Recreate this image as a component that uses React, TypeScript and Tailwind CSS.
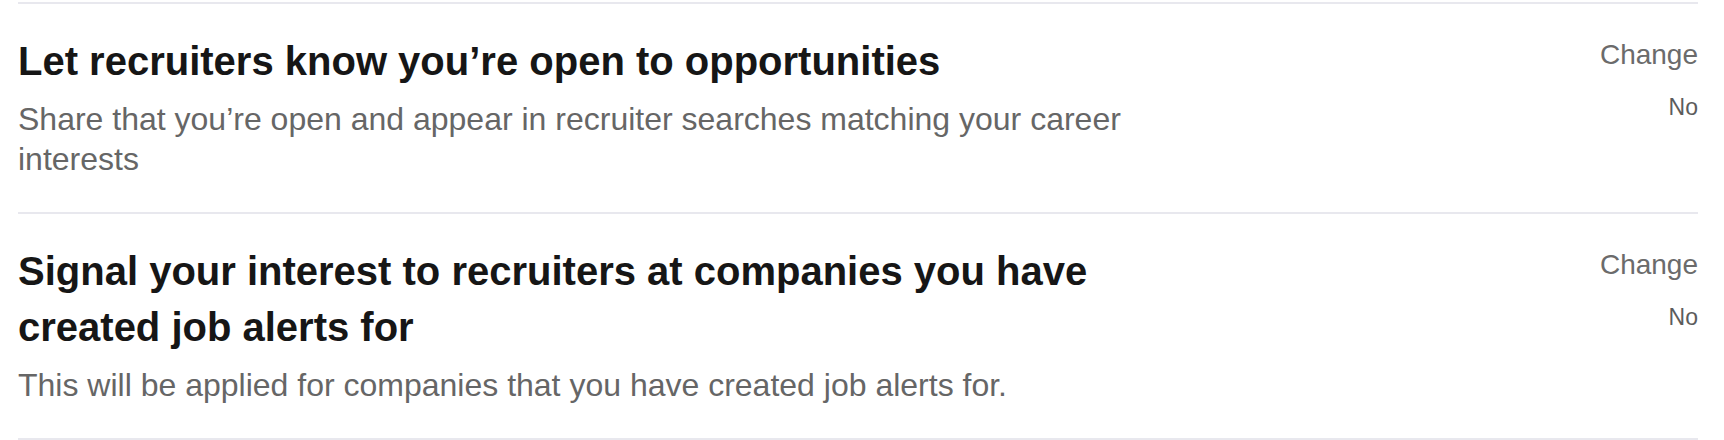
const font = { fontFamily: '"Liberation Sans", Arial, Helvetica, sans-serif' };

interface Setting {
  title: string;
  description: string;
  value: string;
}

const settings: Setting[] = [
  {
    title: "Let recruiters know you’re open to opportunities",
    description:
      "Share that you’re open and appear in recruiter searches matching your career interests",
    value: "No",
  },
  {
    title: "Signal your interest to recruiters at companies you have created job alerts for",
    description: "This will be applied for companies that you have created job alerts for.",
    value: "No",
  },
];

function SettingRow({ setting }: { setting: Setting }) {
  return (
    <li className="flex items-start justify-between border-t-2 border-[#e8e8ee] pt-[29px] pb-[33px]">
      <div className="w-[1160px]">
        <h3 className="text-[40px] leading-[56px] font-bold text-[#161616]">{setting.title}</h3>
        <p className="mt-[10px] text-[32px] leading-[40px] text-[#666666]">{setting.description}</p>
      </div>
      <div className="mt-[6px] flex flex-col items-end">
        <button type="button" className="text-[28px] leading-[32px] text-[#6b6b6b]">
          Change
        </button>
        <span className="mt-[22px] text-[23px] leading-[28px] text-[#5c5c5c]">{setting.value}</span>
      </div>
    </li>
  );
}

export default function App() {
  return (
    <div className="min-h-[440px] bg-white pt-[2px]" style={font}>
      <ul className="ml-[18px] w-[1680px] border-b-2 border-[#e8e8ee]">
        {settings.map((s) => (
          <SettingRow key={s.title} setting={s} />
        ))}
      </ul>
    </div>
  );
}
